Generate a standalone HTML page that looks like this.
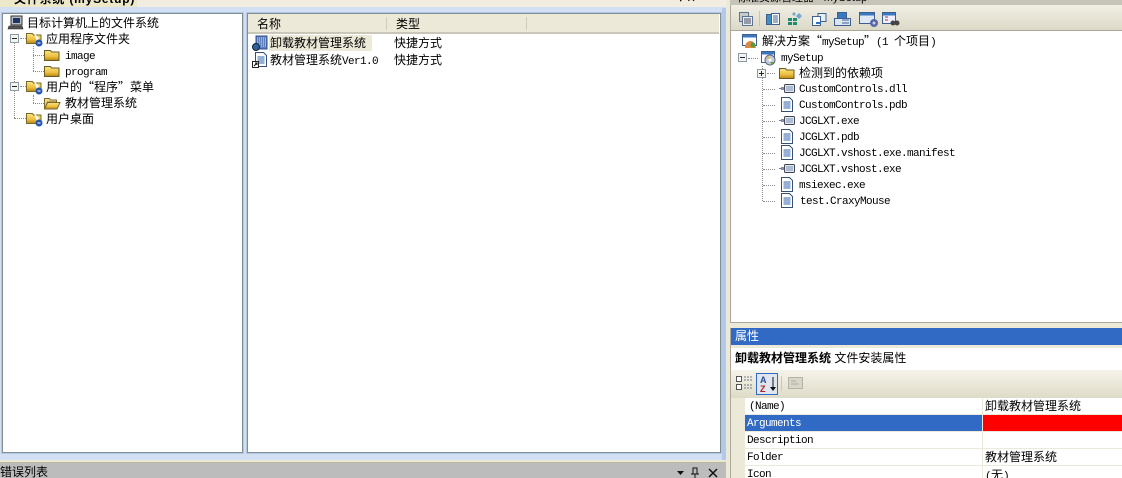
<!DOCTYPE html>
<html><head><meta charset="utf-8"><style>
html,body{margin:0;padding:0;background:#fff}
#p{position:relative;width:1122px;height:478px;overflow:hidden;background:#ece9d8;font:12px/16px "Liberation Sans","WenQuanYi Zen Hei","Noto Sans CJK SC",sans-serif;color:#000}
#p div{position:absolute}
.t{white-space:nowrap;height:16px}
.m{font-family:"Liberation Mono","WenQuanYi Zen Hei",monospace;font-size:11px;letter-spacing:-.6px}
.t.m{transform:translateY(1px)}
.q{display:inline-block;width:12px;font-family:"WenQuanYi Zen Hei","Noto Sans CJK SC",sans-serif;text-align:right}
.q.r{text-align:left}
svg{position:absolute;overflow:visible}
.d{border-left:1px dotted #888}
.h{border-top:1px dotted #888;height:0}
.b{width:7px;height:7px;border:1px solid #8a9aa8;background:#f4f4ee}
.b:after{content:"";position:absolute;left:1px;top:3px;width:5px;height:1px;background:#223}
.p:before{content:"";position:absolute;left:3px;top:1px;width:1px;height:5px;background:#223}
</style></head><body><div id="p">

<div style="left:0;top:0;width:137px;height:8px;background:#ede8c8"></div>
<div style="left:137px;top:0;width:590px;height:7px;background:#f1ede0"></div>
<div class="t" style="left:14px;top:-9px;font-weight:bold;letter-spacing:.8px">文件系统 (mySetup)</div>
<div class="t" style="left:678px;top:-9px;font-size:11px">▾ ✕</div>
<div style="left:0;top:7px;width:726px;height:453px;background:#d3dff2"></div>
<div style="left:722px;top:8px;width:4px;height:452px;background:#b3c9ec"></div>
<div style="left:0;top:460px;width:730px;height:2px;background:#ebe8d8"></div>

<div style="left:2px;top:13px;width:239px;height:438px;background:#fff;border:1px solid #7f8f92;box-shadow:0 0 0 1px #b4c8e6"></div>
<div style="left:247px;top:13px;width:472px;height:438px;background:#fff;border:1px solid #7f8f92;box-shadow:0 0 0 1px #b4c8e6"></div>

<!-- left tree lines -->
<div class="d" style="left:14px;top:42px;height:76px"></div>
<div class="h" style="left:14px;top:118px;width:12px"></div>
<div class="h" style="left:20px;top:38px;width:6px"></div>
<div class="h" style="left:20px;top:86px;width:6px"></div>
<div class="d" style="left:33px;top:46px;height:25px"></div>
<div class="h" style="left:33px;top:55px;width:11px"></div>
<div class="h" style="left:33px;top:71px;width:11px"></div>
<div class="d" style="left:33px;top:95px;height:8px"></div>
<div class="h" style="left:33px;top:103px;width:11px"></div>
<div class="b" style="left:10px;top:34px"></div>
<div class="b" style="left:10px;top:82px"></div>

<!-- computer icon -->
<svg style="left:8px;top:15px" width="16" height="15"><rect x="3" y="1" width="11" height="9" fill="#b8bcc0" stroke="#333"/><rect x="5" y="3" width="7" height="5" fill="#1d3563"/><path d="M1 11h13l1 3H0z" fill="#555" stroke="#222" stroke-width=".6"/></svg>
<svg width="0" height="0"><defs>
<linearGradient id="g" x1="0" y1="0" x2="0" y2="1"><stop offset="0" stop-color="#f8e48a"/><stop offset=".6" stop-color="#eebf3c"/><stop offset="1" stop-color="#b9841a"/></linearGradient>
<g id="f"><path d="M.5 2.500h6l1 1.500h7.500v8.500H.5z" fill="url(#g)" stroke="#6b5a22"/></g>
<g id="s"><path d="M.5 2.500h6l1 1.500h7.500v8.500H.5z" fill="url(#g)" stroke="#7a6a2a"/><path d="M8 2l5 5-2 4z" fill="#fff" opacity=".9"/><circle cx="13" cy="12" r="3.500" fill="#2456ad"/><path d="M11.500 12h3" stroke="#fff"/></g>
<g id="o"><path d="M.5 2.500h5l1 1.500h6v2H3.500L.5 13z" fill="#f3d88a" stroke="#7a6a2a"/><path d="M3.500 6.500H16l-3 6.500H.5z" fill="url(#g)" stroke="#7a6a2a"/></g>
<g id="doc"><path d="M2.500 .5h8l3 3v11h-11z" fill="#fff" stroke="#35517a"/><path d="M4.500 5h7M4.500 7h7M4.500 9h7M4.500 11h7" stroke="#2a62a8"/></g>
<g id="asm"><rect x="5.500" y="2.500" width="10" height="8" rx="1" fill="#e4e7ea" stroke="#445"/><rect x="7" y="4" width="7" height="5" fill="#a9bcd4"/><path d="M0 6.500h2" stroke="#778"/><rect x="2" y="5" width="3" height="3" fill="#7d8fa8"/></g>
</defs></svg>
<svg style="left:26px;top:31px" width="16" height="16"><use href="#s"/></svg>
<svg style="left:44px;top:48px" width="16" height="14"><use href="#f"/></svg>
<svg style="left:44px;top:64px" width="16" height="14"><use href="#f"/></svg>
<svg style="left:26px;top:79px" width="16" height="16"><use href="#s"/></svg>
<svg style="left:44px;top:96px" width="16" height="14"><use href="#o"/></svg>
<svg style="left:26px;top:111px" width="16" height="16"><use href="#s"/></svg>

<div class="t" style="left:27px;top:15px">目标计算机上的文件系统</div>
<div class="t" style="left:46px;top:31px">应用程序文件夹</div>
<div class="t m" style="left:65px;top:48px">image</div>
<div class="t m" style="left:65px;top:64px">program</div>
<div class="t" style="left:46px;top:79px">用户的<span class="q">“</span>程序<span class="q r">”</span>菜单</div>
<div class="t" style="left:65px;top:95px">教材管理系统</div>
<div class="t" style="left:46px;top:111px">用户桌面</div>

<!-- list -->
<div style="left:248px;top:14px;width:471px;height:19px;background:#ece9d8"></div>
<div style="left:248px;top:32px;width:471px;height:2px;background:#cbc7b8"></div>
<div style="left:386px;top:17px;width:1px;height:13px;background:#cfccbc"></div>
<div style="left:526px;top:17px;width:1px;height:13px;background:#cfccbc"></div>
<div class="t" style="left:257px;top:16px">名称</div>
<div class="t" style="left:396px;top:16px">类型</div>
<div style="left:269px;top:35px;width:103px;height:16px;background:#ece9d8"></div>
<svg style="left:252px;top:35px" width="16" height="16"><rect x="4" y="1" width="11" height="13" fill="#5f7fbd" stroke="#2f4c85"/><path d="M5 3h9M5 5h9M5 7h9M5 9h9M5 11h9" stroke="#cfdcf2" stroke-dasharray="1 1"/><circle cx="4" cy="12" r="3.500" fill="#2f5f9f" stroke="#123"/></svg>
<svg style="left:252px;top:52px" width="16" height="16"><use href="#doc" x="1"/><rect x=".5" y="9.500" width="6" height="6" fill="#fff" stroke="#222"/><path d="M2 14l3-3M3 11h2v2" stroke="#111" fill="none"/></svg>
<div class="t" style="left:270px;top:35px">卸载教材管理系统</div>
<div class="t" style="left:270px;top:52px">教材管理系统<span class="m">Ver1.0</span></div>
<div class="t" style="left:394px;top:35px">快捷方式</div>
<div class="t" style="left:394px;top:52px">快捷方式</div>

<!-- bottom bar -->
<div style="left:0;top:462px;width:726px;height:1px;background:#b9b9a0"></div>
<div style="left:0;top:463px;width:726px;height:15px;background:#bcbcbc"></div>
<div class="t" style="left:0;top:464px">错误列表</div>
<svg style="left:676px;top:468px" width="44" height="10"><path d="M1 3h7l-3.500 4z" fill="#111"/><path d="M17 0h4v6h-4zM19 6v4M15 6h8" fill="none" stroke="#111"/><path d="M33 1l8 8M41 1l-8 8" stroke="#111" stroke-width="1.500"/></svg>

<!-- right panel -->
<div style="left:730px;top:0;width:392px;height:478px;background:#f2efe2"></div>
<div style="left:730px;top:0;width:392px;height:5px;background:#c6c4b8"></div>
<div class="t" style="left:737px;top:-10px;font-size:11px">标准资源管理器 - mySetup</div>
<div style="left:731px;top:5px;width:391px;height:25px;background:linear-gradient(#f1efe4,#dcd9c8)"></div>
<div style="left:731px;top:30px;width:391px;height:292px;background:#fff;border-top:1px solid #aca899;box-sizing:border-box"></div>
<div style="left:730px;top:5px;width:1px;height:473px;background:#aca899"></div>

<!-- toolbar icons -->
<svg style="left:738px;top:10px" width="160" height="18"><g stroke="#5c7394" fill="#e8eef6"><path d="M1.500 2.500h9v9h-9z" fill="#c9ccc8"/><path d="M4.500 6.500h10v9h-10z"/><path d="M6 9h7M6 11h7M6 13h7" stroke="#445"/></g><rect x="21" y="1" width="1" height="15" fill="#c8c4b0"/><g stroke="#3f5f8f"><path d="M28.500 4.500h7v10h-7z" fill="#3f8fc0"/><path d="M33.500 3.500h8v11h-8z" fill="#fff"/><path d="M35 6h5M35 8h5M35 10h5M35 12h5"/></g><g><path d="M50 8h4v3h-4zM55 8h4v3h-4zM50 12h4v3h-4zM55 12h4v3h-4z" fill="#1f8a70"/><path d="M61 3l3 3-3 3-3-3zM56 2l2 2-2 2-2-2z" fill="#7aa4d0"/></g><g stroke="#3f5f8f"><path d="M80 3.500h8v8h-8z" fill="#e6eef8"/><path d="M74.500 6.500h8v9h-8z" fill="#fff"/><path d="M78 13h5" stroke="#2b72c7" stroke-width="2"/></g><g stroke="#3f5f8f"><path d="M99.500 2.500h9v6h-9z" fill="#3b78bf"/><path d="M96.500 8.500h16v7h-16z" fill="#dbe6f3"/><path d="M104 10h7M104 13h7"/></g><g><rect x="121.500" y="2.500" width="15" height="11" fill="#dfe9f6" stroke="#3f5f8f"/><rect x="122" y="3" width="14" height="2.500" fill="#3b78bf"/><circle cx="136" cy="13" r="4" fill="#5566aa"/><circle cx="136" cy="13" r="1.500" fill="#ccd"/></g><g><rect x="144.500" y="2.500" width="13" height="11" fill="#eef" stroke="#3f5f8f"/><rect x="145" y="3" width="12" height="2.500" fill="#3b78bf"/><path d="M147 7h3M147 10h3" stroke="#b33"/><circle cx="155" cy="13" r="2.500" fill="#444"/><circle cx="159" cy="13" r="2.500" fill="#444"/></g></svg>

<!-- right tree -->
<svg style="left:741px;top:33px" width="17" height="17"><rect x="1.500" y="1.500" width="14" height="11" fill="#fff" stroke="#3f5f8f"/><rect x="2" y="2" width="13" height="2.500" fill="#3b78bf"/><path d="M4 15c0-6 4-7 6-7s4 2 5 7z" fill="#d84"/><circle cx="12" cy="12" r="2.500" fill="#5a9a40"/></svg>
<div class="t" style="left:762px;top:33px">解决方案<span class="q">“</span><span class="m">mySetup</span><span class="q r">”</span><span class="m">(1 </span>个项目<span class="m">)</span></div>
<div class="b" style="left:738px;top:53px"></div>
<div class="h" style="left:748px;top:58px;width:10px"></div>
<svg style="left:760px;top:50px" width="17" height="16"><rect x="1.500" y="1.500" width="13" height="11" fill="#fff" stroke="#3f5f8f"/><rect x="2" y="2" width="12" height="2.500" fill="#3b78bf"/><circle cx="10" cy="10" r="5" fill="#c4cbdc" stroke="#667"/><circle cx="10" cy="10" r="1.500" fill="#fff"/><path d="M6 9l3-3 1 3z" fill="#d6c04a"/><path d="M10 12l4 0-2 3z" fill="#68a045"/></svg>
<div class="t m" style="left:781px;top:50px">mySetup</div>
<div class="d" style="left:762px;top:66px;height:135px"></div>
<div class="b p" style="left:757px;top:69px"></div>
<div class="h" style="left:767px;top:73px;width:8px"></div>
<svg style="left:779px;top:66px" width="16" height="14"><use href="#f"/></svg>
<div class="t" style="left:799px;top:65px">检测到的依赖项</div>

<div class="h" style="left:763px;top:89px;width:12px"></div>
<div class="h" style="left:763px;top:105px;width:12px"></div>
<div class="h" style="left:763px;top:121px;width:12px"></div>
<div class="h" style="left:763px;top:137px;width:12px"></div>
<div class="h" style="left:763px;top:153px;width:12px"></div>
<div class="h" style="left:763px;top:169px;width:12px"></div>
<div class="h" style="left:763px;top:185px;width:12px"></div>
<div class="h" style="left:763px;top:201px;width:12px"></div>

<svg style="left:779px;top:82px" width="16" height="14"><use href="#asm"/></svg>
<svg style="left:779px;top:97px" width="16" height="16"><use href="#doc"/></svg>
<svg style="left:779px;top:114px" width="16" height="14"><use href="#asm"/></svg>
<svg style="left:779px;top:129px" width="16" height="16"><use href="#doc"/></svg>
<svg style="left:779px;top:145px" width="16" height="16"><use href="#doc"/></svg>
<svg style="left:779px;top:162px" width="16" height="14"><use href="#asm"/></svg>
<svg style="left:779px;top:177px" width="16" height="16"><use href="#doc"/></svg>
<svg style="left:779px;top:193px" width="16" height="16"><use href="#doc"/></svg>

<div class="t m" style="left:799px;top:81px">CustomControls.dll</div>
<div class="t m" style="left:799px;top:97px">CustomControls.pdb</div>
<div class="t m" style="left:799px;top:113px">JCGLXT.exe</div>
<div class="t m" style="left:799px;top:129px">JCGLXT.pdb</div>
<div class="t m" style="left:799px;top:145px">JCGLXT.vshost.exe.manifest</div>
<div class="t m" style="left:799px;top:161px">JCGLXT.vshost.exe</div>
<div class="t m" style="left:799px;top:177px">msiexec.exe</div>
<div class="t m" style="left:800px;top:193px">test.CraxyMouse</div>

<!-- properties -->
<div style="left:730px;top:322px;width:392px;height:6px;background:#ece9d8;border-top:1px solid #aca899;box-sizing:border-box"></div>
<div style="left:731px;top:328px;width:391px;height:17px;background:#316ac5"></div>
<div class="t" style="left:735px;top:328px;color:#fff">属性</div>
<div style="left:731px;top:345px;width:391px;height:3px;background:#ece9d8"></div>
<div style="left:731px;top:348px;width:391px;height:22px;background:#fff"></div>
<div class="t" style="left:735px;top:350px"><b>卸载教材管理系统</b> 文件安装属性</div>
<div style="left:731px;top:370px;width:391px;height:28px;background:linear-gradient(#f6f4ea,#dedbc8)"></div>
<svg style="left:735px;top:373px" width="70" height="20"><rect x="1.500" y="3.500" width="5" height="5" fill="#fff" stroke="#555"/><rect x="1.500" y="11.500" width="5" height="5" fill="#fff" stroke="#555"/><path d="M9 4h8M9 7h8M9 12h8M9 15h8" stroke="#778" stroke-dasharray="2 1"/><rect x="21.500" y=".5" width="21" height="21" fill="#e0e6f0" stroke="#316ac5"/><path d="M38 4v12" stroke="#111"/><path d="M35 14h6l-3 4z" fill="#111"/><text x="25" y="10" font-size="9" font-weight="bold" fill="#2a4c8e" font-family="Liberation Sans">A</text><text x="25" y="19" font-size="9" font-weight="bold" fill="#b02020" font-family="Liberation Sans">Z</text><rect x="46" y="3" width="1" height="15" fill="#ccc8b4"/><rect x="53.500" y="4.500" width="14" height="11" fill="#d8d6c8" stroke="#b5b3a5"/><path d="M56 8h5M56 11h8" stroke="#aaa"/></svg>
<div style="left:731px;top:398px;width:391px;height:80px;background:#fff"></div>
<div style="left:731px;top:398px;width:14px;height:80px;background:#ece9d8"></div>
<div style="left:745px;top:415px;width:238px;height:17px;background:#316ac5"></div>
<div style="left:983px;top:415px;width:139px;height:17px;background:#f00"></div>
<div style="left:745px;top:414px;width:377px;height:1px;background:#ece9d8"></div>
<div style="left:745px;top:448px;width:377px;height:1px;background:#ece9d8"></div>
<div style="left:745px;top:465px;width:377px;height:1px;background:#ece9d8"></div>
<div style="left:745px;top:431px;width:377px;height:1px;background:#ece9d8"></div>
<div style="left:982px;top:398px;width:1px;height:80px;background:#ece9d8"></div>
<div class="t m" style="left:749px;top:398px">(Name)</div>
<div class="t m" style="left:747px;top:415px;color:#fff">Arguments</div>
<div class="t m" style="left:747px;top:432px">Description</div>
<div class="t m" style="left:747px;top:449px">Folder</div>
<div class="t m" style="left:747px;top:466px">Icon</div>
<div class="t" style="left:985px;top:398px">卸载教材管理系统</div>
<div class="t" style="left:985px;top:449px">教材管理系统</div>
<div class="t m" style="left:985px;top:465px">(<span style="font:12px 'WenQuanYi Zen Hei','Noto Sans CJK SC',sans-serif;letter-spacing:0">无</span>)</div>
</div></body></html>
